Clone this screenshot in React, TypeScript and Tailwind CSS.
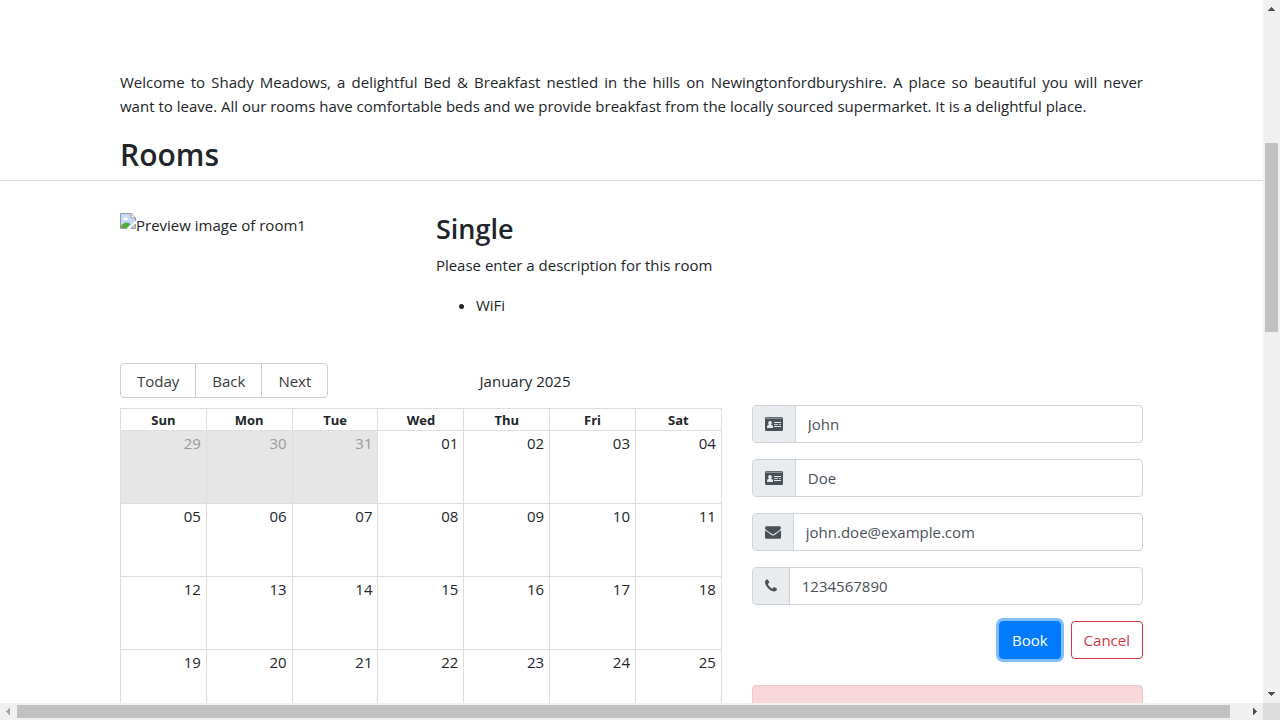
import type { ReactNode } from "react";

const dayNames = ["Sun", "Mon", "Tue", "Wed", "Thu", "Fri", "Sat"];

const weeks = [
  ["29", "30", "31", "01", "02", "03", "04"],
  ["05", "06", "07", "08", "09", "10", "11"],
  ["12", "13", "14", "15", "16", "17", "18"],
  ["19", "20", "21", "22", "23", "24", "25"],
];

function isOffRange(week: number, day: string) {
  return week === 0 && Number(day) > 7;
}

function IdCardIcon() {
  return (
    <svg width="18" height="14" viewBox="0 0 18 14" aria-hidden="true">
      <path fill="#495057" d="M1.5 0h15A1.5 1.5 0 0 1 18 1.5v11a1.5 1.5 0 0 1-1.5 1.5h-15A1.5 1.5 0 0 1 0 12.500v-11A1.5 1.5 0 0 1 1.5 0z" />
      <path fill="#8b9197" d="M1 .6h16V2H1z" />
      <path fill="#e9ecef" d="M5 4a1.700 2 0 0 1 1 3.700c1.400.1 2 1.100 2 3.300H2c0-2.200.6-3.200 2-3.300A1.700 2 0 0 1 5 4z" />
      <path fill="#e9ecef" d="M9 5h7v1H9zM9 9h7v1H9z" />
      <path fill="#c3c8cc" d="M9 7h4v1H9zM14 7h2v1h-2z" />
    </svg>
  );
}

function EnvelopeIcon() {
  return (
    <svg width="16" height="16" viewBox="0 0 1792 1792" fill="#495057" aria-hidden="true">
      <path d="M1792 710v794q0 66-47 113t-113 47h-1472q-66 0-113-47t-47-113v-794q44 49 101 87 362 246 497 345 57 42 92.5 65.5t94.5 48 110 24.5h2q51 0 110-24.5t94.5-48 92.5-65.5q170-123 498-345 57-39 100-87zm0-294q0 79-49 151t-122 123q-376 261-468 325-10 7-42.5 31t-54 38.5-52 32.5-57.5 27-50 9h-2q-23 0-50-9t-57.5-27-52-32.5-54-38.5-42.5-31q-91-64-262-182.5t-205-142.5q-62-42-117-115.5t-55-136.5q0-78 41.5-130t118.5-52h1472q65 0 112.5 47t47.5 113z" />
    </svg>
  );
}

function PhoneIcon() {
  return (
    <svg width="12" height="16" viewBox="192 0 1408 1792" fill="#495057" aria-hidden="true">
      <path d="M1600 1240q0 27-10 70.500t-21 68.500q-21 50-122 106-94 51-186 51-27 0-53-3.500t-57.500-12.500-47-14.500-55.500-20.500-49-18q-98-35-175-83-127-79-264-216t-216-264q-48-77-83-175-3-9-18-49t-20.500-55.500-14.500-47-12.500-57.500-3.500-53q0-92 51-186 56-101 106-122 25-11 68.500-21t70.500-10q14 0 21 3 18 6 53 76 11 19 30 54t35 63.500 31 53.500q3 4 17.500 25t21.500 35.500 7 28.500q0 20-28.500 50t-62 55-62 53-28.500 46q0 9 5 22.500t8.500 20.500 14 24 11.500 19q76 137 174 235t235 174q2 1 19 11.500t24 14 20.500 8.500 22.500 5q18 0 46-28.500t53-62 55-62 50-28.500q14 0 28.500 7t35.500 21.500 25 17.500q25 15 53.500 31t63.500 35 54 30q70 35 76 53 3 7 3 21z" />
    </svg>
  );
}

function BrokenImageIcon() {
  return (
    <svg width="16" height="16" viewBox="0 0 16 16" aria-hidden="true">
      <path fill="#c3d9f7" d="M1 1h10v4h4v10H1z" />
      <path fill="#fff" d="M3 6.500c0-1 .7-1.500 1.500-1.500.3-1 2.500-1 2.700.2C8 5.200 8.500 6 8 7H3zM11 1l4 4h-4z" />
      <path fill="#55a83a" d="M1 14.500V13c2-3 5-4.500 8-3l1.500 1L7 15H1z" />
      <path fill="#fff" d="M16 7 7 16h2l7-6z" />
      <path fill="none" stroke="#9a9a9a" d="M7 15.500H.5V.5h10.500l4.500 4.500v3M11 .5v4.500h4.500M11 15.500h4.500V11z" />
      <path fill="#fff" d="M15 8.500 8 15h2.500L15 11z" />
    </svg>
  );
}

type FieldProps = {
  label: string;
  type: string;
  value: string;
  icon: ReactNode;
};

function Field({ label, type, value, icon }: FieldProps) {
  const id = label.toLowerCase();
  return (
    <div className="mb-4 flex h-[38px] rounded border border-[#ced4da] bg-white">
      <label htmlFor={id} aria-label={label} className="flex shrink-0 items-center rounded-l-[3px] border-r border-[#ced4da] bg-[#e9ecef] px-3">
        {icon}
      </label>
      <input id={id} type={type} defaultValue={value} className="min-w-0 flex-1 rounded-r bg-transparent px-3 text-[#495057] outline-none" />
    </div>
  );
}

function VerticalScrollbar() {
  return (
    <div className="flex w-[17px] shrink-0 flex-col items-center bg-[#f0f0f0]" aria-hidden="true">
      <svg width="17" height="17" viewBox="0 0 17 17" fill="#505050" shapeRendering="crispEdges">
        <path d="M8 7h1v1H8zM7 8h3v1H7zM6 9h5v1H6zM5 10h7v1H5z" />
      </svg>
      <div className="flex min-h-0 w-full flex-1 flex-col px-0.5">
        <div className="grow-[126]" />
        <div className="grow-[189] bg-[#c1c1c1]" />
        <div className="grow-[354]" />
      </div>
      <svg width="17" height="17" viewBox="0 0 17 17" fill="#505050" shapeRendering="crispEdges">
        <path d="M5 6h7v1H5zM6 7h5v1H6zM7 8h3v1H7zM8 9h1v1H8z" />
      </svg>
    </div>
  );
}

function HorizontalScrollbar() {
  return (
    <div className="flex h-[17px] shrink-0 bg-[#f0f0f0]" aria-hidden="true">
      <svg width="17" height="17" viewBox="0 0 17 17" fill="#a3a3a3" shapeRendering="crispEdges">
        <path d="M6 8h1v1H6zM7 7h1v3H7zM8 6h1v5H8zM9 5h1v7H9z" />
      </svg>
      <div className="flex flex-1 py-0.5">
        <div className="w-[98.7%] bg-[#c1c1c1]" />
      </div>
      <svg width="17" height="17" viewBox="0 0 17 17" fill="#505050" shapeRendering="crispEdges">
        <path d="M7 5h1v7H7zM8 6h1v5H8zM9 7h1v3H9zM10 8h1v1h-1z" />
      </svg>
      <div className="w-[17px] bg-[#dcdcdc]" />
    </div>
  );
}

function Calendar() {
  return (
    <section aria-label="Availability">
      <div className="mb-2.5 flex items-center">
        <div className="flex h-[35px] divide-x divide-[#ccc] rounded border border-[#ccc] text-[#373a3c]">
          <button type="button" className="px-4">Today</button>
          <button type="button" className="px-4">Back</button>
          <button type="button" className="px-4">Next</button>
        </div>
        <span className="flex-1 text-center">January 2025</span>
      </div>
      <table className="w-full table-fixed border-collapse">
        <thead>
          <tr className="h-[22px]">
            {dayNames.map((name) => (
              <th key={name} scope="col" className="border border-[#ddd] p-0 text-[13px] leading-5 font-bold">
                {name}
              </th>
            ))}
          </tr>
        </thead>
        <tbody>
          {weeks.map((week, index) => (
            <tr key={index} className="h-[73px]">
              {week.map((day) => (
                <td
                  key={day}
                  className={
                    isOffRange(index, day)
                      ? "border border-[#ddd] bg-[#e6e6e6] px-[5px] py-0 text-right align-top text-[#999]"
                      : "border border-[#ddd] px-[5px] py-0 text-right align-top"
                  }
                >
                  {day}
                </td>
              ))}
            </tr>
          ))}
        </tbody>
      </table>
    </section>
  );
}

export default function App() {
  return (
    <div className="flex h-screen flex-col overflow-hidden bg-white font-['Open_Sans',sans-serif] text-[15px] leading-6 text-[#212529]">
      <div className="flex min-h-0 flex-1">
        <main className="min-w-0 flex-1 overflow-hidden pt-[70px]">
          <p className="mx-[120px] mb-4 text-justify">
            Welcome to Shady Meadows, a delightful Bed &amp; Breakfast nestled in the hills on Newingtonfordburyshire. A place so beautiful you will never want&nbsp;to leave. All our rooms have comfortable beds and we provide breakfast from the locally sourced supermarket. It is a delightful place.
          </p>
          <div className="mb-8 border-b border-[#ddd] px-[120px] pb-1">
            <h2 className="text-[30px] leading-[42px] font-semibold">Rooms</h2>
          </div>
          <div className="px-[105px]">
            <div className="grid h-[150px] grid-cols-[30%_70%]">
              <div className="flex items-start px-[15px]">
                <BrokenImageIcon />
                <span>Preview image of room1</span>
              </div>
              <div className="px-[15px]">
                <h3 className="mb-2 text-[27px] leading-8 font-semibold">Single</h3>
                <p className="mb-4">Please enter a description for this room</p>
                <ul className="list-disc pl-10">
                  <li>WiFi</li>
                </ul>
              </div>
            </div>
            <div className="grid grid-cols-[60%_40%]">
              <div className="px-[15px]">
                <Calendar />
              </div>
              <form className="px-[15px] pt-[42px]" onSubmit={(event) => event.preventDefault()}>
                <Field label="Firstname" type="text" value="John" icon={<IdCardIcon />} />
                <Field label="Lastname" type="text" value="Doe" icon={<IdCardIcon />} />
                <Field label="Email" type="email" value="john.doe@example.com" icon={<EnvelopeIcon />} />
                <Field label="Phone" type="tel" value="1234567890" icon={<PhoneIcon />} />
                <div className="flex justify-end gap-2.5">
                  <button type="submit" className="h-[38px] rounded border border-[#007bff] bg-[#007bff] px-3 text-white ring-3 ring-[#80bdff]">
                    Book
                  </button>
                  <button type="button" className="h-[38px] rounded border border-[#dc3545] px-3 text-[#dc3545]">
                    Cancel
                  </button>
                </div>
                <div role="alert" className="mt-[26px] h-24 rounded border border-[#f5c6cb] bg-[#f8d7da]" />
              </form>
            </div>
          </div>
        </main>
        <VerticalScrollbar />
      </div>
      <HorizontalScrollbar />
    </div>
  );
}
